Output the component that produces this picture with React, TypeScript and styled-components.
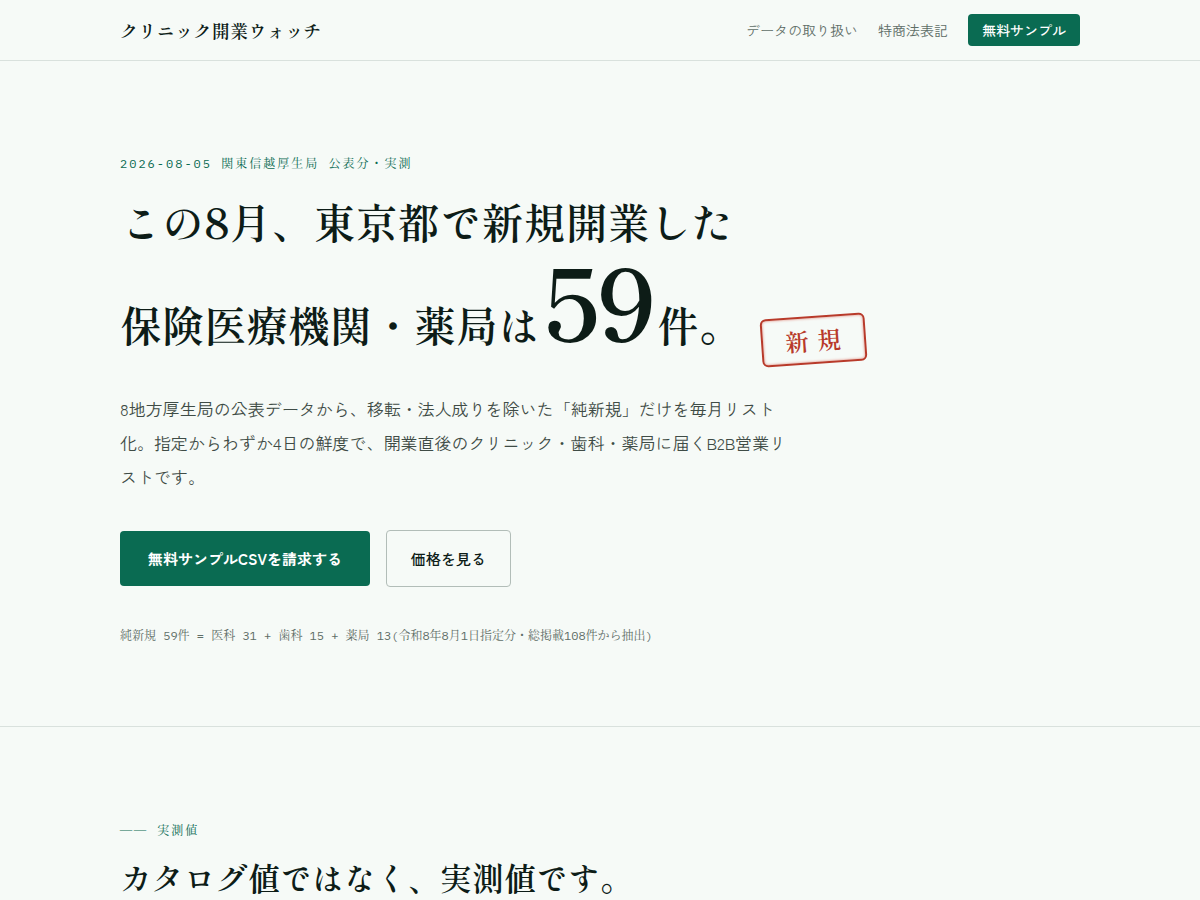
import React from "react";
import styled, { createGlobalStyle } from "styled-components";

const serif = `"Shippori Mincho", "Noto Serif CJK JP", "Noto Sans CJK JP", serif`;
const sans = `"Zen Kaku Gothic New", "Noto Sans CJK JP", sans-serif`;
const mono = `"IBM Plex Mono", "Liberation Mono", "Noto Serif CJK JP", "Noto Sans CJK JP", monospace`;

const color = {
  paper: "#f6faf7",
  ink: "#0d1c17",
  body: "#3f4c46",
  muted: "#5f6e67",
  line: "#d9e1dd",
  outline: "#b2bdb8",
  green: "#0a6b52",
  red: "#b83a2a",
};

const GlobalStyle = createGlobalStyle`
  *, *::before, *::after { box-sizing: border-box; }
  body {
    margin: 0;
    background: ${color.paper};
    color: ${color.ink};
    font-family: ${sans};
    font-size: 16px;
    line-height: 1.8;
  }
`;

const Container = styled.div`
  max-width: 1008px;
  margin: 0 auto;
  padding: 0 24px;
`;

const Header = styled.header`
  border-bottom: 1px solid ${color.line};
`;

const HeaderRow = styled(Container)`
  display: flex;
  align-items: center;
  justify-content: space-between;
  gap: 20px;
  min-height: 60px;
`;

const Brand = styled.a`
  font-family: ${serif};
  font-size: 18px;
  font-weight: 600;
  letter-spacing: 0.02em;
  color: ${color.ink};
  text-decoration: none;
`;

const Nav = styled.nav`
  display: flex;
  align-items: center;
  gap: 20px;
  font-size: 14px;
  line-height: 24px;
`;

const NavLink = styled.a`
  color: ${color.muted};
  text-decoration: none;
`;

const NavButton = styled.a`
  padding: 4px 14px;
  border-radius: 4px;
  background: ${color.green};
  color: #fff;
  font-weight: 500;
  text-decoration: none;
`;

const Section = styled.section`
  padding: 92px 0 80px;
  border-bottom: 1px solid ${color.line};
`;

const Label = styled.p`
  margin: 0;
  font-family: ${mono};
  font-size: 12px;
  line-height: 22px;
  letter-spacing: 2px;
  color: ${color.green};
`;

const Dash = styled.span`
  font-family: ${serif};
`;

const Title = styled.h1`
  margin: 18px 0 28px;
  font-family: ${serif};
  font-size: 42px;
  font-weight: 600;
  line-height: 56px;
`;

const Count = styled.span`
  margin: 0 4px;
  font-size: 100px;
  line-height: 1;
  letter-spacing: -3px;
`;

const Stamp = styled.span`
  display: inline-block;
  margin-left: 20px;
  padding: 0 22px;
  border: 2px solid ${color.red};
  border-radius: 6px;
  box-shadow: inset 0 0 2px 1px rgba(216, 58, 42, 0.3);
  color: ${color.red};
  font-size: 24px;
  line-height: 44px;
  letter-spacing: 1px;
  vertical-align: -8px;
  transform: rotate(-4deg);
`;

const Lead = styled.p`
  max-width: 670px;
  margin: 0 0 36px;
  font-size: 17px;
  line-height: 34px;
  color: ${color.body};
`;

const Actions = styled.div`
  display: flex;
  flex-wrap: wrap;
  align-items: center;
  gap: 16px;
`;

const Action = styled.a<{ $primary?: boolean }>`
  padding: 14px ${(p) => (p.$primary ? "28px" : "24px")};
  border: ${(p) => (p.$primary ? "0" : `1px solid ${color.outline}`)};
  border-radius: 4px;
  background: ${(p) => (p.$primary ? color.green : "transparent")};
  color: ${(p) => (p.$primary ? "#fff" : color.ink)};
  font-size: 15px;
  font-weight: ${(p) => (p.$primary ? 700 : 500)};
  line-height: 27px;
  text-decoration: none;
`;

const Note = styled.p`
  margin: 38px 0 0;
  font-family: ${mono};
  font-size: 12px;
  line-height: 21px;
  color: ${color.muted};
`;

const Heading = styled.h2`
  margin: 12px 0 0;
  font-family: ${serif};
  font-size: 32px;
  font-weight: 600;
  line-height: 46px;
`;

export default function App() {
  return (
    <>
      <GlobalStyle />
      <Header>
        <HeaderRow>
          <Brand href="#top">クリニック開業ウォッチ</Brand>
          <Nav>
            <NavLink href="#data">データの取り扱い</NavLink>
            <NavLink href="#law">特商法表記</NavLink>
            <NavButton href="#sample">無料サンプル</NavButton>
          </Nav>
        </HeaderRow>
      </Header>
      <main lang="ja">
        <Section id="top">
          <Container>
            <Label>2026-08-05 関東信越厚生局 公表分・実測</Label>
            <Title>
              この8月、東京都で新規開業した
              <br />
              保険医療機関・薬局は<Count>59</Count>件。<Stamp>新 規</Stamp>
            </Title>
            <Lead>
              8地方厚生局の公表データから、移転・法人成りを除いた「純新規」だけを毎月リスト化。指定からわずか4日の鮮度で、開業直後のクリニック・歯科・薬局に届くB2B営業リストです。
            </Lead>
            <Actions>
              <Action $primary href="#sample">無料サンプルCSVを請求する</Action>
              <Action href="#price">価格を見る</Action>
            </Actions>
            <Note>純新規 59件 = 医科 31 + 歯科 15 + 薬局 13(令和8年8月1日指定分・総掲載108件から抽出)</Note>
          </Container>
        </Section>
        <Section id="data">
          <Container>
            <Label><Dash>――</Dash> 実測値</Label>
            <Heading>カタログ値ではなく、実測値です。</Heading>
          </Container>
        </Section>
      </main>
    </>
  );
}
